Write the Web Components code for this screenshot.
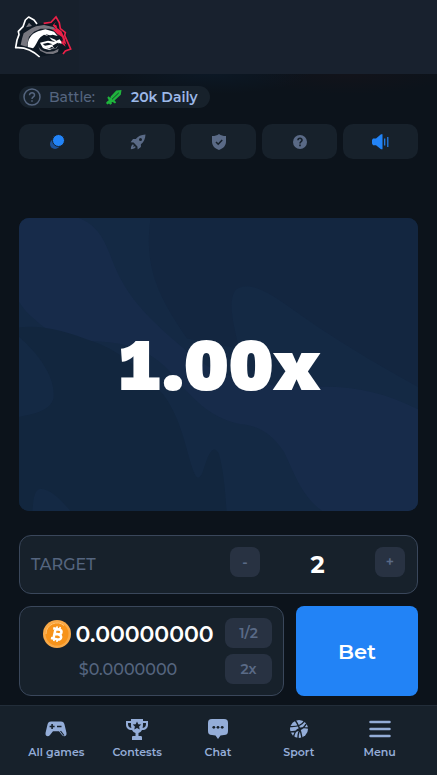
<!DOCTYPE html>
<html lang="en">
<head>
<meta charset="utf-8">
<meta name="viewport" content="width=device-width, initial-scale=1">
<title>Crash</title>
<style>
  :root {
    --bg: #0c131b;
    --panel: #17212b;
    --line: #3a475b;
    --muted: #55657f;
    --chip: #283242;
    --light: #94add8;
    --blue: #2283f6;
  }
  * { box-sizing: border-box; }
  body {
    margin: 0;
    min-height: 100vh;
    display: flex;
    flex-direction: column;
    background: var(--bg);
    color: #fff;
    font-family: Montserrat, Inter, sans-serif;
  }
  main {
    flex: 1;
    display: flex;
    flex-direction: column;
    gap: 12px;
    padding: 12px 19px 9px;
    background:
      radial-gradient(100px 20px at 48% 0, #0c1825, transparent),
      radial-gradient(100px 20px at 80% 0, #12131a, transparent);
  }
  battle-pill { margin-bottom: 4px; }
  game-board { margin: 47px 0 12px; }
  .bet-row { display: grid; grid-template-columns: 265fr 122fr; gap: 12px; }
</style>
</head>
<body>
  <app-header></app-header>
  <main>
    <battle-pill label="Battle:">20k Daily</battle-pill>
    <tool-bar>
      <tool-button icon="coins" label="Mode" active></tool-button>
      <tool-button icon="rocket" label="Turbo"></tool-button>
      <tool-button icon="shield" label="Fairness"></tool-button>
      <tool-button icon="help" label="Help"></tool-button>
      <tool-button icon="sound" label="Sound" active></tool-button>
    </tool-bar>
    <game-board>1.00x</game-board>
    <target-field value="2">TARGET</target-field>
    <div class="bet-row">
      <amount-field value="0.00000000">$0.0000000</amount-field>
      <bet-button>Bet</bet-button>
    </div>
  </main>
  <bottom-nav>
    <nav-item icon="gamepad">All games</nav-item>
    <nav-item icon="trophy">Contests</nav-item>
    <nav-item icon="chat">Chat</nav-item>
    <nav-item icon="ball">Sport</nav-item>
    <nav-item icon="menu">Menu</nav-item>
  </bottom-nav>

<script>
const icons = {
  coins: `<svg width="16" height="16" viewBox="0 0 16 16"><circle cx="6" cy="10" r="5" fill="#1d5299"/><circle cx="9.500" cy="6.500" r="6" fill="#2283f6" stroke="#17212b"/></svg>`,
  rocket: `<svg width="16" height="16" viewBox="0 0 16 16" fill="currentColor"><path fill-rule="evenodd" d="M15.500.5c-4.500.2-7.600 1.700-9.700 4.600H3L.6 8.300l3 .3 3.800 3.800.3 3 3.200-2.400v-2.800c2.900-2.100 4.400-5.200 4.600-9.700zM10.500 4a1.500 1.500 0 1 1 0 3 1.500 1.500 0 0 1 0-3z"/><path d="M3 10.300C1.500 11 1 12.500.8 15.200c2.700-.2 4.200-.7 4.900-2.200l-1-.8-1.600.7.700-1.600z"/></svg>`,
  shield: `<svg width="14" height="16" viewBox="0 0 14 16"><path fill="currentColor" d="M7 0c2 1.500 4 2 7 2v5.500c0 4-2.500 7-7 8.500-4.500-1.500-7-4.500-7-8.500V2c3 0 5-.5 7-2z"/><path fill="none" stroke="#17212b" stroke-width="1.600" d="M4 8l2.200 2.200L10.200 6"/></svg>`,
  help: `<svg width="14" height="14" viewBox="0 0 14 14"><circle cx="7" cy="7" r="7" fill="currentColor"/><path fill="none" stroke="#17212b" stroke-width="1.600" d="M5 5.300C5 2.600 9.200 2.700 9 5.200c0 1.400-2 1.500-2 3.200M7 9.600v1.600"/></svg>`,
  sound: `<svg width="17" height="16" viewBox="0 0 17 16"><path fill="currentColor" d="M1 4.500h3L9 .3h1.500v15H9L4 11.300H1L0 9.500V6z"/><path stroke="currentColor" stroke-width="1.200" d="M12.700 4.500v7M15.800 3v10"/></svg>`,
  question: `<svg width="18" height="18" viewBox="0 0 18 18" fill="none" stroke="currentColor" stroke-width="1.500"><circle cx="9" cy="9" r="8"/><path d="M6.500 7.200c0-3.300 5.200-3.200 5 0C11.400 8.900 9 9 9 11M9 12.300v1.500"/></svg>`,
  sword: `<svg width="16" height="15" viewBox="0 0 16 15"><path fill="#1fb43c" d="M15.500 0l-.7 4.800-6.300 5.800 1.700 1.600-1.200 1.200-2.400-1.500-1 .4.300 1.400-1.700 1.100L3 13.600l-1.600.8L0 13l1.200-1.800.9-.2.600-1.100-1.400-2.200L2.600 6.300l1.800 1.700.3-1.600L10.300.6z"/><path stroke="#17212b" stroke-width=".8" d="M6 9.300l6.800-6.500"/></svg>`,
  bitcoin: `<svg width="28" height="28" viewBox="0 0 28 28"><circle cx="14" cy="14" r="14" fill="#f9a947"/><circle cx="14" cy="14" r="11.500" fill="#f7931a"/><path fill="none" stroke="#ffc477" d="M3 14a11 11 0 0 1 18-8.500"/><g transform="rotate(13 14 14)" fill="none" stroke="#fff" stroke-width="2.500"><path d="M9 9.200h6c4 0 4 4.800 0 4.800h-3.500M15 14c5 0 5 5.200.5 5.200H9M11.500 9v10"/><path stroke-width="1.700" d="M12.500 6.500V9M15.600 6.500V9M12.500 19v2.700M15.600 19v2.700"/></g></svg>`,
  gamepad: `<svg width="22" height="22" viewBox="0 0 22 22"><path fill="currentColor" fill-rule="evenodd" d="M6 2.500h10c2 0 3 1 3.500 3L21.500 14c.4 3.300-2.800 4.300-4.500 2l-3-3.800H8L5 16c-1.700 2.300-4.900 1.300-4.500-2l2-8.500c.5-2 1.500-3 3.500-3zM6.300 5v1.700H4.600v1.600h1.700V10h1.600V8.300h1.700V6.700H7.900V5zM12 6.700v1.600h4.500V6.700z"/><path stroke="#17212b" stroke-width="1.200" d="M15.500 12l3.500 4.500"/></svg>`,
  trophy: `<svg width="22" height="22" viewBox="0 0 22 22"><path fill="currentColor" fill-rule="evenodd" d="M5 0h12v2h5v3.500c0 3.500-2 5.500-6 5.500-.8 1.500-2 2.500-3.500 3v3H15c.8 0 1 .8 1 1.500v2.500H6v-2.500c0-.8.200-1.500 1-1.500h2.500v-3C8 13.500 6.800 12.500 6 11c-4 0-6-2-6-5.500V2h5zm0 4H2c-.2 3 .8 4.700 3.400 5C5 7.500 5 6 5 4zm12 0c0 2 0 3.500-.4 5 2.600-.3 3.600-2 3.400-5z"/><path fill="#17212b" d="M11 2.500l1.300 2.700 3 .4-2.200 2 .6 3-2.700-1.500-2.700 1.500.6-3-2.200-2 3-.4z"/></svg>`,
  chat: `<svg width="22" height="22" viewBox="0 0 22 22"><path fill="currentColor" d="M5 0h12c3 0 4 1.500 4 4v8c0 3-1.500 4-4 4l-3.500.5L11 20l-2.500-3.500L5 16c-3 0-4-1.500-4-4V4c0-2.500 1-4 4-4z"/><g fill="#17212b"><circle cx="6.800" cy="8.300" r="1.400"/><circle cx="11" cy="8.300" r="1.400"/><circle cx="15.200" cy="8.300" r="1.400"/></g></svg>`,
  ball: `<svg width="22" height="22" viewBox="0 0 22 22"><circle cx="11" cy="10" r="9" fill="currentColor"/><g fill="none" stroke="#17212b" stroke-width="1.400"><path d="M7 1c3 4 5.500 9 7 18M1.500 7.500C9 8 14 6 16.500 2M20.500 9C12 7.500 7 11 5.500 17.500M2 13c6 0 14-3 16-8M10 19c0-4 1-8 4-10"/></g></svg>`,
  menu: `<svg width="22" height="22" viewBox="0 0 22 22"><path stroke="currentColor" stroke-width="2.500" stroke-linecap="round" d="M1.500 3h19M1.500 10h19M1.500 17h19"/></svg>`,
};

const base = `
  *, :host { box-sizing: border-box; }
  svg { display: block; flex: none; }
  button, input { font: inherit; color: inherit; margin: 0; padding: 0; border: 0; background: none; }
`;

class BaseElement extends HTMLElement {
  connectedCallback() {
    if (this.shadowRoot) return;
    this.attachShadow({ mode: 'open' }).innerHTML = `<style>${base}${this.styles()}</style>${this.render()}`;
  }
}

customElements.define('app-header', class extends BaseElement {
  styles() {
    return `
      :host {
        display: flex;
        height: 74px;
        padding: 8px;
        background: linear-gradient(90deg, #17202c 18%, #18212e 18%);
      }
    `;
  }
  render() {
    return `
      <a href="#" aria-label="Home">
        <svg width="70" height="54" viewBox="-12 -12 210 162">
          <path fill="#0d1722" d="M50 14L72 34 110 34 132 12 148 50 163 66 176 112 150 124 120 128 84 134 50 112 12 108 22 62Z"/>
          <path fill="none" stroke="#fff" stroke-width="5" stroke-linejoin="round" d="M75 36L66 24 50 15 40 24 33 44 19 58 21 68 15 84 11 107C36 105 60 113 83 135"/>
          <path fill="#77777f" d="M42 46L51 32 60 42zM35 64L60 48 72 43 96 39 124 45 137 58 112 50 86 50 66 59 51 74 44 104 26 99 30 80z"/>
          <path fill="#fff" d="M47 105C46 84 56 66 78 58L100 52 126 59 137 72 122 68 108 72 96 68 86 75C76 84 74 98 63 109z"/>
          <path fill="#fff" d="M112 76l18 7 4 7-14-5zM84 92l24-6 18 3 17-7 8 12-10 3-8 12-20 6-20-6z"/>
          <path fill="#0d1722" d="M92 96l16-4 14 5-11 2-12 2zM121 101l16-9 4 7-12 12zM103 105l7 5 9-6 8 5-18 2zM100 66l18 5-6 4zM139 92l12 5 12 11-6 10-16-7z"/>
          <path fill="#77777f" d="M78 99c3 11 12 18 27 21l20-2 15-8-2 10-15 6-20-1-19-9z"/>
          <path fill="none" stroke="#0d1722" stroke-width="3" d="M83 98c4 11 15 18 31 17l13-5"/>
          <path fill="none" stroke="#ea2148" stroke-width="5" d="M95 34L117 31 132 15 142 32 145 50 160 62 158 70 165 86 176 111 160 117 153 126"/>
          <path fill="#ea2148" d="M122 40L132 30 135 48 148 57 158 77 163 98 151 87 145 75 132 62 120 51 132 52zM146 86l10 5 5 13-11-9z"/>
          <path fill="#0d1722" d="M127 38l6-12 4 15zM138 67l12 8 4 12-10-5z"/>
        </svg>
      </a>
    `;
  }
});

customElements.define('battle-pill', class extends BaseElement {
  styles() {
    return `
      :host {
        display: flex;
        align-items: center;
        align-self: flex-start;
        gap: 8px;
        height: 22px;
        padding: 0 12px 0 4px;
        border-radius: 11px;
        background: var(--panel);
        color: var(--muted);
        font-size: 14px;
        font-weight: 500;
        line-height: 20px;
      }
      .icon { margin: 0 1px 0 3px; }
      a { color: #9cb8e8; font-weight: 600; text-decoration: none; }
    `;
  }
  render() {
    return `
      ${icons.question}
      <span>${this.getAttribute('label')}</span>
      <span class="icon">${icons.sword}</span>
      <a href="#"><slot></slot></a>
    `;
  }
});

customElements.define('tool-bar', class extends BaseElement {
  styles() {
    return `:host { display: flex; gap: 6px; }`;
  }
  render() {
    return `<slot></slot>`;
  }
});

customElements.define('tool-button', class extends BaseElement {
  styles() {
    return `
      :host { flex: 1; color: #5a6a86; }
      :host([active]) { color: var(--blue); }
      button {
        display: flex;
        align-items: center;
        justify-content: center;
        width: 100%;
        height: 35px;
        border-radius: 10px;
        background: var(--panel);
      }
    `;
  }
  render() {
    return `<button aria-label="${this.getAttribute('label')}">${icons[this.getAttribute('icon')]}</button>`;
  }
});

customElements.define('game-board', class extends BaseElement {
  styles() {
    return `
      :host {
        display: grid;
        aspect-ratio: 399 / 293;
        border-radius: 10px;
        overflow: hidden;
        font-family: "Work Sans", Montserrat, Inter, sans-serif;
        font-size: 74px;
        font-weight: 900;
        font-variant-numeric: tabular-nums;
      }
      svg, output { grid-area: 1 / 1; }
      svg { width: 100%; height: 100%; }
      output { place-self: center; line-height: 80px; }
    `;
  }
  render() {
    return `
      <svg viewBox="57 39 1194 878" preserveAspectRatio="xMidYMid slice">
        <path fill="#142944" d="M57 39h1194v878H57z"/>
        <path fill="#132640" d="M451 39C430 180 470 270 560 400L715 430C700 360 680 290 705 255C740 225 800 260 850 295C980 390 1130 480 1251 545V39Z"/>
        <path fill="#172b4a" d="M57 39H235C290 60 310 100 330 150C370 260 420 320 550 430C640 520 800 550 940 545C1050 540 1150 560 1251 612V917H965C900 870 880 800 850 740C810 680 770 660 720 657C640 640 600 600 550 550C470 440 400 410 260 408C200 405 170 390 130 365C100 340 75 320 57 290Z"/>
        <path fill="#12263e" d="M57 367C130 358 200 380 280 410C370 440 450 520 490 570C550 650 560 760 585 810Q598 830 610 790C625 740 640 715 655 745C668 790 674 850 678 917H212C180 880 150 850 120 850C100 855 100 890 97 917H57V635C110 625 150 615 160 580C168 520 120 450 57 395Z"/>
      </svg>
      <output><slot></slot></output>
    `;
  }
});

customElements.define('target-field', class extends BaseElement {
  styles() {
    return `
      :host {
        display: flex;
        justify-content: space-between;
        padding: 11px 12px 10px 11px;
        border: 1px solid var(--line);
        border-radius: 12px;
        background: var(--panel);
        line-height: 36px;
      }
      label { color: var(--muted); font-size: 16px; font-weight: 500; }
      .stepper { display: flex; width: 175px; }
      button {
        flex: none;
        width: 30px;
        height: 30px;
        border-radius: 8px;
        background: var(--chip);
        color: #5a6a86;
        font-size: 14px;
        font-weight: 600;
        line-height: 28px;
      }
      input {
        flex: 1;
        min-width: 0;
        height: 36px;
        font-size: 24px;
        font-weight: 700;
        text-align: center;
      }
    `;
  }
  render() {
    return `
      <label for="target"><slot></slot></label>
      <div class="stepper">
        <button data-step="-1">-</button>
        <input id="target" inputmode="decimal" value="${this.getAttribute('value')}">
        <button data-step="1">+</button>
      </div>
    `;
  }
  connectedCallback() {
    super.connectedCallback();
    const input = this.shadowRoot.querySelector('input');
    this.shadowRoot.querySelectorAll('button').forEach((button) => {
      button.addEventListener('click', () => {
        input.value = Math.max(1, Number(input.value) + Number(button.dataset.step));
      });
    });
  }
});

customElements.define('amount-field', class extends BaseElement {
  styles() {
    return `
      :host {
        display: flex;
        min-width: 0;
        padding: 11px;
        border: 1px solid var(--line);
        border-radius: 12px;
        background: var(--panel);
      }
      .values, .chips { display: flex; flex-direction: column; gap: 6px; }
      .values { flex: 1; min-width: 0; align-items: center; }
      .amount { display: flex; align-items: center; gap: 5px; height: 32px; }
      input { width: 138px; font-size: 22px; font-weight: 600; }
      output { color: var(--muted); font-size: 16px; font-weight: 500; line-height: 28px; }
      button {
        width: 47px;
        height: 30px;
        border-radius: 8px;
        background: var(--chip);
        color: #5a6a86;
        font-size: 14px;
        font-weight: 600;
      }
    `;
  }
  render() {
    return `
      <div class="values">
        <div class="amount">
          ${icons.bitcoin}
          <input aria-label="Bet amount" inputmode="decimal" value="${this.getAttribute('value')}">
        </div>
        <output><slot></slot></output>
      </div>
      <div class="chips">
        <button data-factor="0.5">1/2</button>
        <button data-factor="2">2x</button>
      </div>
    `;
  }
  connectedCallback() {
    super.connectedCallback();
    const input = this.shadowRoot.querySelector('input');
    this.shadowRoot.querySelectorAll('button').forEach((button) => {
      button.addEventListener('click', () => {
        input.value = (Number(input.value) * Number(button.dataset.factor)).toFixed(8);
      });
    });
  }
});

customElements.define('bet-button', class extends BaseElement {
  styles() {
    return `
      :host { display: flex; }
      button {
        flex: 1;
        border-radius: 8px;
        background: var(--blue);
        font-size: 21px;
        font-weight: 600;
      }
    `;
  }
  render() {
    return `<button><slot></slot></button>`;
  }
});

customElements.define('bottom-nav', class extends BaseElement {
  styles() {
    return `
      :host {
        display: block;
        border-top: 1px solid #222d39;
        background: var(--panel);
      }
      nav { display: flex; padding: 13px 17px 15px 16px; }
    `;
  }
  render() {
    return `<nav><slot></slot></nav>`;
  }
});

customElements.define('nav-item', class extends BaseElement {
  styles() {
    return `
      :host { flex: 1; }
      a {
        display: flex;
        flex-direction: column;
        align-items: center;
        gap: 3px;
        color: var(--light);
        font-size: 11px;
        font-weight: 600;
        line-height: 16px;
        text-decoration: none;
      }
    `;
  }
  render() {
    return `<a href="#">${icons[this.getAttribute('icon')]}<span><slot></slot></span></a>`;
  }
});
</script>
</body>
</html>
